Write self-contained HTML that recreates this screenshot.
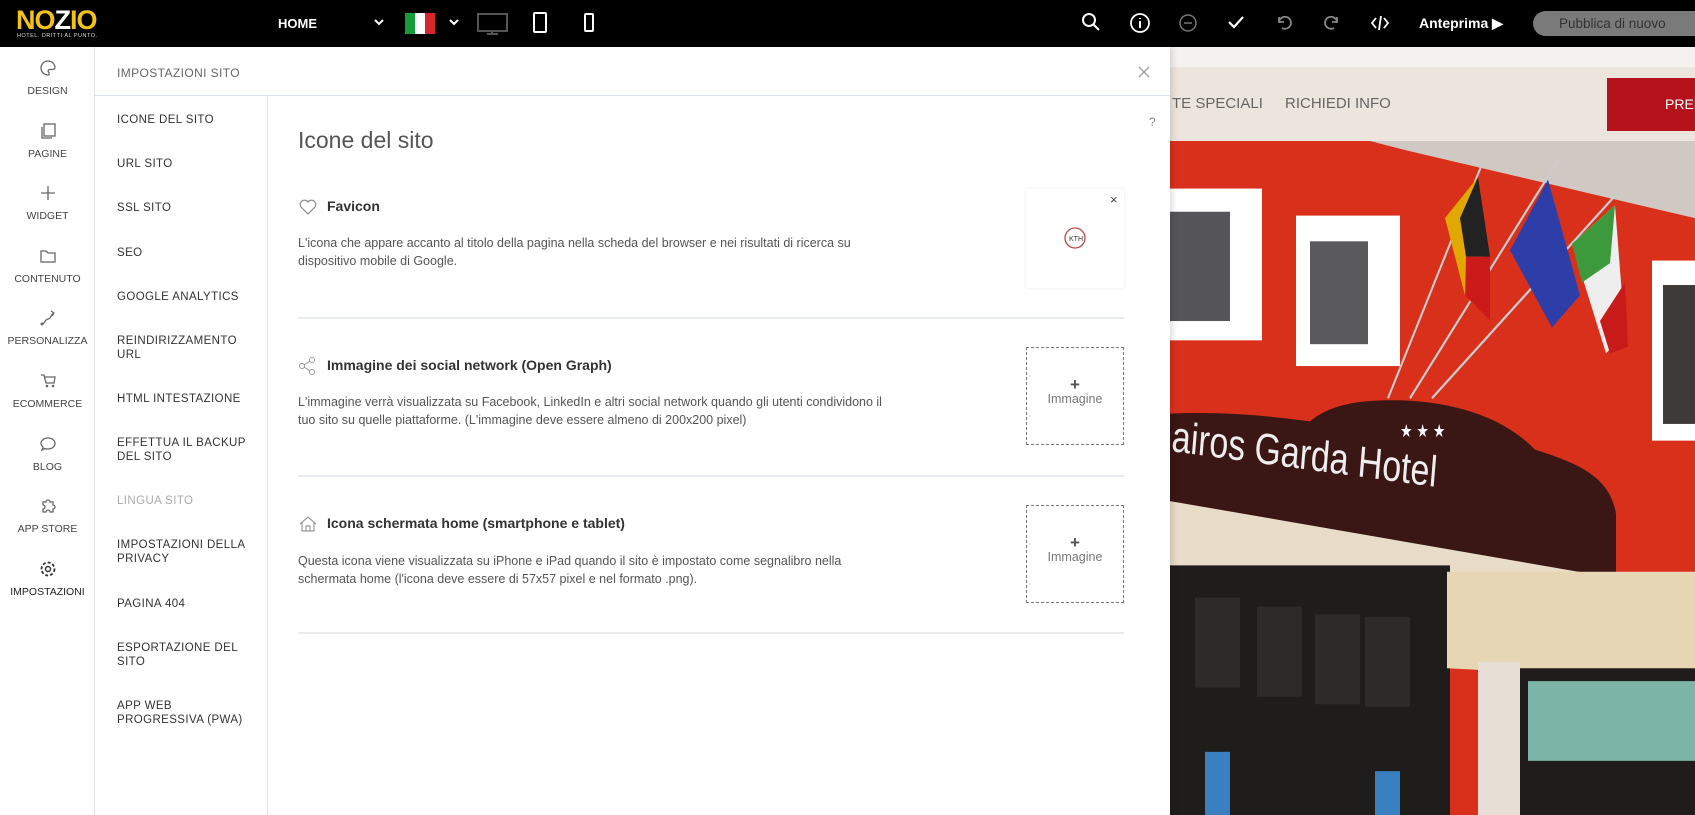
<!DOCTYPE html>
<html><head><meta charset="utf-8"><style>
*{margin:0;padding:0;box-sizing:border-box}
body{width:1695px;height:815px;overflow:hidden;font-family:"Liberation Sans",sans-serif;background:#fff;position:relative}
.a{position:absolute}
#top{left:0;top:0;width:1695px;height:47px;background:#000;color:#fff}
.ic{position:absolute;top:13px}
#side{left:0;top:47px;width:95px;height:768px;background:#fff;border-right:1px solid #dde2e6}
.si{position:absolute;left:0;width:95px;text-align:center;font-size:10.5px;color:#444}
.si svg{display:block;margin:0 auto 8px}
#menu{left:95px;top:96px;width:173px;height:719px;border-right:1px solid #dde3ea}
.mi{position:absolute;left:22px;font-size:11.5px;color:#333;letter-spacing:.4px;line-height:14px}
.h{position:absolute;left:298px;font-size:14px;font-weight:bold;color:#333}
.d{position:absolute;left:298px;font-size:12.5px;color:#555;line-height:18px}
.hr{position:absolute;left:298px;width:826px;height:2px;background:#e9ecef}
.box{position:absolute;left:1026px;width:98px;height:98px;border:1px dashed #777;text-align:center;color:#777;font-size:12.5px}
</style></head><body>
<div id="top" class="a">
 <div class="a" style="left:16px;top:5px;font-size:27px;font-weight:bold;color:#f2c21b;letter-spacing:-1px">NO<span style="color:#fff">Z</span>IO</div>
 <div class="a" style="left:17px;top:33px;font-size:5.5px;color:#ddd;letter-spacing:.5px">HOTEL. DRITTI AL PUNTO.</div>
 <div class="a" style="left:278px;top:16px;font-size:13px;font-weight:bold">HOME</div>
 <svg class="ic" style="left:374px;top:19px" width="10" height="8"><path d="M1 1l4 4 4-4" stroke="#fff" stroke-width="2" fill="none"/></svg>
 <div class="a" style="left:405px;top:13px;width:30px;height:21px;background:linear-gradient(90deg,#1a9b3a 33%,#fff 33% 66%,#d72630 66%)"></div>
 <svg class="ic" style="left:449px;top:19px" width="10" height="8"><path d="M1 1l4 4 4-4" stroke="#fff" stroke-width="2" fill="none"/></svg>
 <svg class="ic" style="left:477px;top:13px" width="31" height="22"><rect x="1" y="1" width="29" height="17" stroke="#555" stroke-width="2" fill="none"/><path d="M10 21h11M15 18v3" stroke="#555" stroke-width="2"/></svg>
 <svg class="ic" style="left:533px;top:12px" width="14" height="22"><rect x="1" y="1" width="12" height="19" rx="1" stroke="#fff" stroke-width="2" fill="none"/></svg>
 <svg class="ic" style="left:584px;top:13px" width="10" height="20"><rect x="1" y="1" width="8" height="17" rx="1" stroke="#fff" stroke-width="2" fill="none"/></svg>
 <svg class="ic" style="left:1082px" width="18" height="20"><circle cx="7" cy="7" r="6" stroke="#fff" stroke-width="2" fill="none"/><path d="M11 11l6 6" stroke="#fff" stroke-width="2"/></svg>
 <svg class="ic" style="left:1129px;top:12px" width="22" height="22"><circle cx="11" cy="11" r="9" stroke="#fff" stroke-width="1.8" fill="none"/><path d="M11 9v7M11 6v1" stroke="#fff" stroke-width="2"/></svg>
 <svg class="ic" style="left:1178px;top:13px" width="20" height="20"><circle cx="10" cy="10" r="8" stroke="#777" stroke-width="1.5" fill="none"/><path d="M6 10h8" stroke="#777" stroke-width="1.5"/></svg>
 <svg class="ic" style="left:1227px;top:15px" width="18" height="14"><path d="M2 7l5 5 9-10" stroke="#fff" stroke-width="2.2" fill="none"/></svg>
 <svg class="ic" style="left:1275px;top:14px" width="18" height="16"><path d="M4 3v5h5M4 8a6 6 0 1 1 3 6" stroke="#888" stroke-width="1.8" fill="none"/></svg>
 <svg class="ic" style="left:1323px;top:14px" width="18" height="16"><path d="M14 3v5H9M14 8a6 6 0 1 0-3 6" stroke="#888" stroke-width="1.8" fill="none"/></svg>
 <svg class="ic" style="left:1370px;top:14px" width="20" height="18"><path d="M6 4L2 9l4 5M14 4l4 5-4 5M11 2L9 16" stroke="#fff" stroke-width="1.8" fill="none"/></svg>
 <div class="a" style="left:1419px;top:15px;font-size:14px;font-weight:bold">Anteprima ▶</div>
 <div class="a" style="left:1533px;top:11px;width:175px;height:25px;border-radius:13px;background:#7a7a7a;color:#333;font-size:13.5px;line-height:25px;padding-left:26px">Pubblica di nuovo</div>
</div>

<div class="a" style="left:1170px;top:47px;width:525px;height:20px;background:#f4f1ee"></div>
<div class="a" style="left:1170px;top:67px;width:525px;height:74px;background:#ece5dd"></div>
<div class="a" style="left:1172px;top:95px;font-size:15px;color:#666">TE SPECIALI</div>
<div class="a" style="left:1285px;top:95px;font-size:15px;color:#666">RICHIEDI INFO</div>
<div class="a" style="left:1607px;top:78px;width:88px;height:53px;background:#b5121b;color:#fff;font-size:14px;line-height:53px;padding-left:58px">PREN</div>
<svg class="a" style="left:1170px;top:141px" width="525" height="674" viewBox="0 0 525 674">
 <rect width="525" height="674" fill="#d9301c"/>
 <g transform="scale(1,1.286)">
 <path d="M200 0H525V60L240 8Z" fill="#cfc8c3"/>
 <rect x="-5" y="37" width="97" height="118" fill="#fff"/><rect x="0" y="55" width="60" height="85" fill="#56565a"/>
 <rect x="126" y="58" width="104" height="117" fill="#fff"/><rect x="140" y="78" width="58" height="80" fill="#5a5a5c"/>
 <rect x="482" y="93" width="50" height="140" fill="#fff"/><rect x="493" y="112" width="40" height="108" fill="#3e3a38"/>
 <path d="M218 200L312 18M240 200L388 15M262 200L448 40" stroke="#ccc" stroke-width="2"/>
 <path d="M275 60L308 28L320 140L295 120Z" fill="#e0a800"/><path d="M290 60L308 28L320 90L296 90Z" fill="#222"/><path d="M296 90L320 90L320 140L295 120Z" fill="#cc1a1a"/>
 <path d="M340 85L378 30L410 120L382 145Z" fill="#2e3ea8"/>
 <path d="M402 80L445 50L455 150L436 165Z" fill="#eee"/><path d="M402 80L445 50L440 95L412 110Z" fill="#3c9a3c"/><path d="M430 140L455 110L458 160L440 165Z" fill="#c91a1a"/>
 <path d="M0 212C60 210 110 215 140 218C160 205 190 200 240 202C300 205 340 220 365 240C405 250 440 260 446 290L446 340L0 285Z" fill="#3a1614"/>
 <path d="M0 280L446 340L430 345L0 330Z" fill="#e8dcc8"/>
 <text x="0" y="262" fill="#eee" font-size="34" font-family="Liberation Sans,sans-serif" transform="rotate(6 200 260)">airos Garda Hotel</text>
 <text x="230" y="230" fill="#fff" font-size="14">★ ★ ★</text>
 <rect x="0" y="330" width="280" height="344" fill="#1f1c1c"/>
 <rect x="25" y="355" width="45" height="70" fill="#2d2a2a"/><rect x="87" y="362" width="45" height="70" fill="#2d2a2a"/><rect x="145" y="368" width="45" height="70" fill="#2d2a2a"/><rect x="195" y="370" width="45" height="70" fill="#2d2a2a"/>
 <path d="M277 335H525V420L277 410Z" fill="#e6d6b4"/>
 <rect x="308" y="405" width="42" height="269" fill="#e7dfd6"/>
 <rect x="350" y="410" width="175" height="264" fill="#201c1c"/>
 <rect x="358" y="420" width="167" height="62" fill="#7db5a8"/>
 <rect x="35" y="475" width="25" height="50" fill="#3a7fc0"/><rect x="205" y="490" width="25" height="50" fill="#3a7fc0"/>
 </g>
</svg>

<div class="a" style="left:95px;top:47px;width:1075px;height:768px;background:#fff;box-shadow:2px 0 6px rgba(0,0,0,.15)"></div>
<div class="a" style="left:95px;top:95px;width:1075px;height:1px;background:#dde3ea"></div>
<div class="a" style="left:117px;top:66px;font-size:12px;color:#666;letter-spacing:.4px">IMPOSTAZIONI SITO</div>
<svg class="a" style="left:1138px;top:66px" width="12" height="12"><path d="M1 1l10 10M11 1L1 11" stroke="#999" stroke-width="1.3"/></svg>
<div class="a" style="left:1149px;top:115px;font-size:12px;color:#888">?</div>

<div id="side" class="a">
 <div class="si" style="top:12px"><svg width="18" height="18"><path d="M9 2a7 7 0 1 0 0 14c1.5 0 1.5-2 .5-3s0-2.5 1.5-2.5H14A2.5 2.5 0 0 0 16 8 7 7 0 0 0 9 2z" stroke="#666" stroke-width="1.3" fill="none"/></svg>DESIGN</div>
 <div class="si" style="top:75px"><svg width="18" height="18"><rect x="5" y="2" width="11" height="12" stroke="#666" stroke-width="1.3" fill="none"/><path d="M3 5v11h10" stroke="#666" stroke-width="1.3" fill="none"/></svg>PAGINE</div>
 <div class="si" style="top:137px"><svg width="18" height="18"><path d="M9 2v14M2 9h14" stroke="#666" stroke-width="1.3"/></svg>WIDGET</div>
 <div class="si" style="top:200px"><svg width="18" height="18"><path d="M2 4h5l2 2h7v9H2z" stroke="#666" stroke-width="1.3" fill="none"/></svg>CONTENUTO</div>
 <div class="si" style="top:262px"><svg width="18" height="18"><path d="M3 15c3 0 3-5 6-5s3-5 6-6M12 2l3 2-2 3" stroke="#666" stroke-width="1.3" fill="none"/><circle cx="3" cy="15" r="1.5" fill="#666"/></svg>PERSONALIZZA</div>
 <div class="si" style="top:325px"><svg width="18" height="18"><path d="M2 3h3l2 8h8l1-6H6" stroke="#666" stroke-width="1.3" fill="none"/><circle cx="8" cy="14" r="1.3" fill="#666"/><circle cx="14" cy="14" r="1.3" fill="#666"/></svg>ECOMMERCE</div>
 <div class="si" style="top:388px"><svg width="18" height="18"><path d="M9 3c4 0 7 2.5 7 5.5S13 14 9 14c-1 0-2 0-3-.5L3 15l1-3C3 11 2 10 2 8.5 2 5.5 5 3 9 3z" stroke="#666" stroke-width="1.3" fill="none"/></svg>BLOG</div>
 <div class="si" style="top:450px"><svg width="18" height="18"><path d="M4 5h3a2 2 0 1 1 4 0h3v3a2 2 0 1 1 0 4v3H11a2 2 0 1 0-4 0H4v-3a2 2 0 1 0 0-4z" stroke="#666" stroke-width="1.3" fill="none"/></svg>APP STORE</div>
 <div class="si" style="top:513px;color:#222"><svg width="18" height="18"><circle cx="9" cy="9" r="2.5" stroke="#333" stroke-width="1.4" fill="none"/><circle cx="9" cy="9" r="6.5" stroke="#333" stroke-width="1.8" stroke-dasharray="3 2" fill="none"/></svg>IMPOSTAZIONI</div>
</div>

<div id="menu" class="a">
 <div class="mi" style="top:17px">ICONE DEL SITO</div>
 <div class="mi" style="top:61px">URL SITO</div>
 <div class="mi" style="top:105px">SSL SITO</div>
 <div class="mi" style="top:150px">SEO</div>
 <div class="mi" style="top:194px">GOOGLE ANALYTICS</div>
 <div class="mi" style="top:238px">REINDIRIZZAMENTO<br>URL</div>
 <div class="mi" style="top:296px">HTML INTESTAZIONE</div>
 <div class="mi" style="top:340px">EFFETTUA IL BACKUP<br>DEL SITO</div>
 <div class="mi" style="top:398px;color:#aaa">LINGUA SITO</div>
 <div class="mi" style="top:442px">IMPOSTAZIONI DELLA<br>PRIVACY</div>
 <div class="mi" style="top:501px">PAGINA 404</div>
 <div class="mi" style="top:545px">ESPORTAZIONE DEL<br>SITO</div>
 <div class="mi" style="top:603px">APP WEB<br>PROGRESSIVA (PWA)</div>
</div>

<div class="a" style="left:298px;top:127px;font-size:23px;color:#555">Icone del sito</div>

<svg class="a" style="left:298px;top:198px" width="20" height="18"><path d="M10 16L3 9a4 4 0 0 1 7-5 4 4 0 0 1 7 5z" stroke="#888" stroke-width="1.2" fill="none"/></svg>
<div class="h" style="left:327px;top:198px">Favicon</div>
<div class="d" style="top:234px">L'icona che appare accanto al titolo della pagina nella scheda del browser e nei risultati di ricerca su<br>dispositivo mobile di Google.</div>
<div class="a" style="left:1026px;top:189px;width:98px;height:99px;box-shadow:0 0 4px rgba(0,0,0,.08)"></div>
<div class="a" style="left:1110px;top:192px;font-size:13px;color:#444">×</div>
<svg class="a" style="left:1063px;top:226px" width="24" height="24"><circle cx="12" cy="12" r="10" stroke="#b44" stroke-width="1.3" fill="#fff"/><text x="6" y="15" font-size="7" fill="#333">KTH</text></svg>
<div class="hr" style="top:317px"></div>

<svg class="a" style="left:298px;top:356px" width="20" height="20"><circle cx="14" cy="4" r="2.5" stroke="#999" fill="none"/><circle cx="4" cy="10" r="2.5" stroke="#999" fill="none"/><circle cx="14" cy="16" r="2.5" stroke="#999" fill="none"/><path d="M6 9l6-4M6 11l6 4" stroke="#999"/></svg>
<div class="h" style="left:327px;top:357px">Immagine dei social network (Open Graph)</div>
<div class="d" style="top:393px">L'immagine verrà visualizzata su Facebook, LinkedIn e altri social network quando gli utenti condividono il<br>tuo sito su quelle piattaforme. (L'immagine deve essere almeno di 200x200 pixel)</div>
<div class="box" style="top:347px"><div style="margin-top:30px;font-size:17px;font-weight:bold;color:#555;line-height:14px">+</div>Immagine</div>
<div class="hr" style="top:475px"></div>

<svg class="a" style="left:298px;top:514px" width="20" height="20"><path d="M2 10L10 3l8 7M4 8v9h12V8M8 17v-5h4v5" stroke="#999" stroke-width="1.2" fill="none"/></svg>
<div class="h" style="left:327px;top:515px">Icona schermata home (smartphone e tablet)</div>
<div class="d" style="top:552px">Questa icona viene visualizzata su iPhone e iPad quando il sito è impostato come segnalibro nella<br>schermata home (l'icona deve essere di 57x57 pixel e nel formato .png).</div>
<div class="box" style="top:505px"><div style="margin-top:30px;font-size:17px;font-weight:bold;color:#555;line-height:14px">+</div>Immagine</div>
<div class="hr" style="top:632px"></div>
</body></html>
